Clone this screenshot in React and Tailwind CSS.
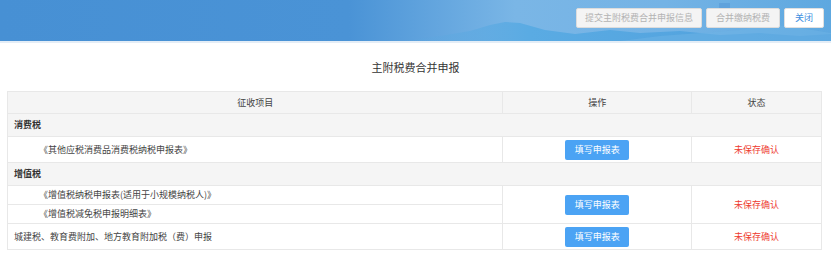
import React from "react";

const font = { fontFamily: '"Noto Sans CJK SC", "Noto Sans", sans-serif' };

function HeaderArt() {
  return (
    <svg
      className="absolute inset-0 h-full w-full"
      viewBox="0 0 831 41"
      preserveAspectRatio="none"
    >
      <defs>
        <linearGradient id="sky" x1="0" x2="1" y1="0" y2="0">
          <stop offset="0" stopColor="#4790d4" />
          <stop offset="0.42" stopColor="#4a93d6" />
          <stop offset="0.62" stopColor="#7ab6e6" />
          <stop offset="0.8" stopColor="#74b3e5" />
          <stop offset="1" stopColor="#5ea8e0" />
        </linearGradient>
        <linearGradient id="hill" x1="0" x2="1" y1="0" y2="0">
          <stop offset="0" stopColor="#5aa6df" stopOpacity="0" />
          <stop offset="0.3" stopColor="#5aabe3" />
          <stop offset="1" stopColor="#4f9fdc" />
        </linearGradient>
      </defs>
      <rect width="831" height="41" fill="url(#sky)" />
      <path
        d="M400 41 L440 36 L470 31 L490 25 L505 22 L520 23 L545 30 L575 34 L610 30 L640 33 L680 31 L720 35 L760 33 L800 36 L831 34 L831 41 Z"
        fill="url(#hill)"
      />
      <path
        d="M620 41 L660 36 L700 33 L740 30 L770 24 L800 28 L831 33 L831 41 Z"
        fill="#6db4e6"
        opacity="0.5"
      />
      <rect x="719" y="3" width="11" height="11" fill="#5c9fd9" opacity="0.8" />
    </svg>
  );
}

function FillButton() {
  return (
    <button className="h-[20px] w-[64px] rounded-[2px] bg-[#4ba3f4] text-[9px] text-white">
      填写申报表
    </button>
  );
}

function Status() {
  return <span className="text-[9px] text-[#ee3b30]">未保存确认</span>;
}

export default function App() {
  const cell = "border border-[#e8e8e8]";
  return (
    <div className="min-h-[264px] w-[831px] bg-white" style={font}>
      <header className="relative h-[43px] border-b-2 border-[#e4edf6]">
        <HeaderArt />
        <div className="relative flex h-full items-start justify-end gap-[4px] pr-[7px] pt-[8px]">
          <button className="h-[20px] w-[126px] rounded-[2px] border border-[#dcdcdc] bg-[#f4f4f4] text-[9px] text-[#b3b3b3]">
            提交主附税费合并申报信息
          </button>
          <button className="h-[20px] w-[74px] rounded-[2px] border border-[#dcdcdc] bg-[#f4f4f4] text-[9px] text-[#b3b3b3]">
            合并缴纳税费
          </button>
          <button className="h-[20px] w-[40px] rounded-[2px] border border-[#e0e0e0] bg-white text-[9px] text-[#3c8de0]">
            关闭
          </button>
        </div>
      </header>

      <h1 className="pt-[16px] pb-[16px] text-center text-[11px] leading-[16px] text-[#333]">
        主附税费合并申报
      </h1>

      <table className="ml-[7px] w-[815px] border-collapse text-[9px] text-[#444]">
        <colgroup>
          <col className="w-[496px]" />
          <col className="w-[189px]" />
          <col className="w-[130px]" />
        </colgroup>
        <thead>
          <tr className="h-[22px] bg-[#f5f5f5]">
            <th className={`${cell} font-normal`}>征收项目</th>
            <th className={`${cell} font-normal`}>操作</th>
            <th className={`${cell} font-normal`}>状态</th>
          </tr>
        </thead>
        <tbody>
          <tr className="h-[23px] bg-[#f5f5f5]">
            <td colSpan={3} className={`${cell} pl-[6px] font-bold text-[#333]`}>
              消费税
            </td>
          </tr>
          <tr className="h-[26px]">
            <td className={`${cell} pl-[31px]`}>《其他应税消费品消费税纳税申报表》</td>
            <td className={`${cell} text-center`}>
              <FillButton />
            </td>
            <td className={`${cell} text-center`}>
              <Status />
            </td>
          </tr>
          <tr className="h-[23px] bg-[#f5f5f5]">
            <td colSpan={3} className={`${cell} pl-[6px] font-bold text-[#333]`}>
              增值税
            </td>
          </tr>
          <tr className="h-[19px]">
            <td className={`${cell} pl-[31px]`}>《增值税纳税申报表(适用于小规模纳税人)》</td>
            <td rowSpan={2} className={`${cell} text-center`}>
              <FillButton />
            </td>
            <td rowSpan={2} className={`${cell} text-center`}>
              <Status />
            </td>
          </tr>
          <tr className="h-[19px]">
            <td className={`${cell} pl-[31px]`}>《增值税减免税申报明细表》</td>
          </tr>
          <tr className="h-[26px]">
            <td className={`${cell} pl-[6px]`}>城建税、教育费附加、地方教育附加税（费）申报</td>
            <td className={`${cell} text-center`}>
              <FillButton />
            </td>
            <td className={`${cell} text-center`}>
              <Status />
            </td>
          </tr>
        </tbody>
      </table>
    </div>
  );
}
